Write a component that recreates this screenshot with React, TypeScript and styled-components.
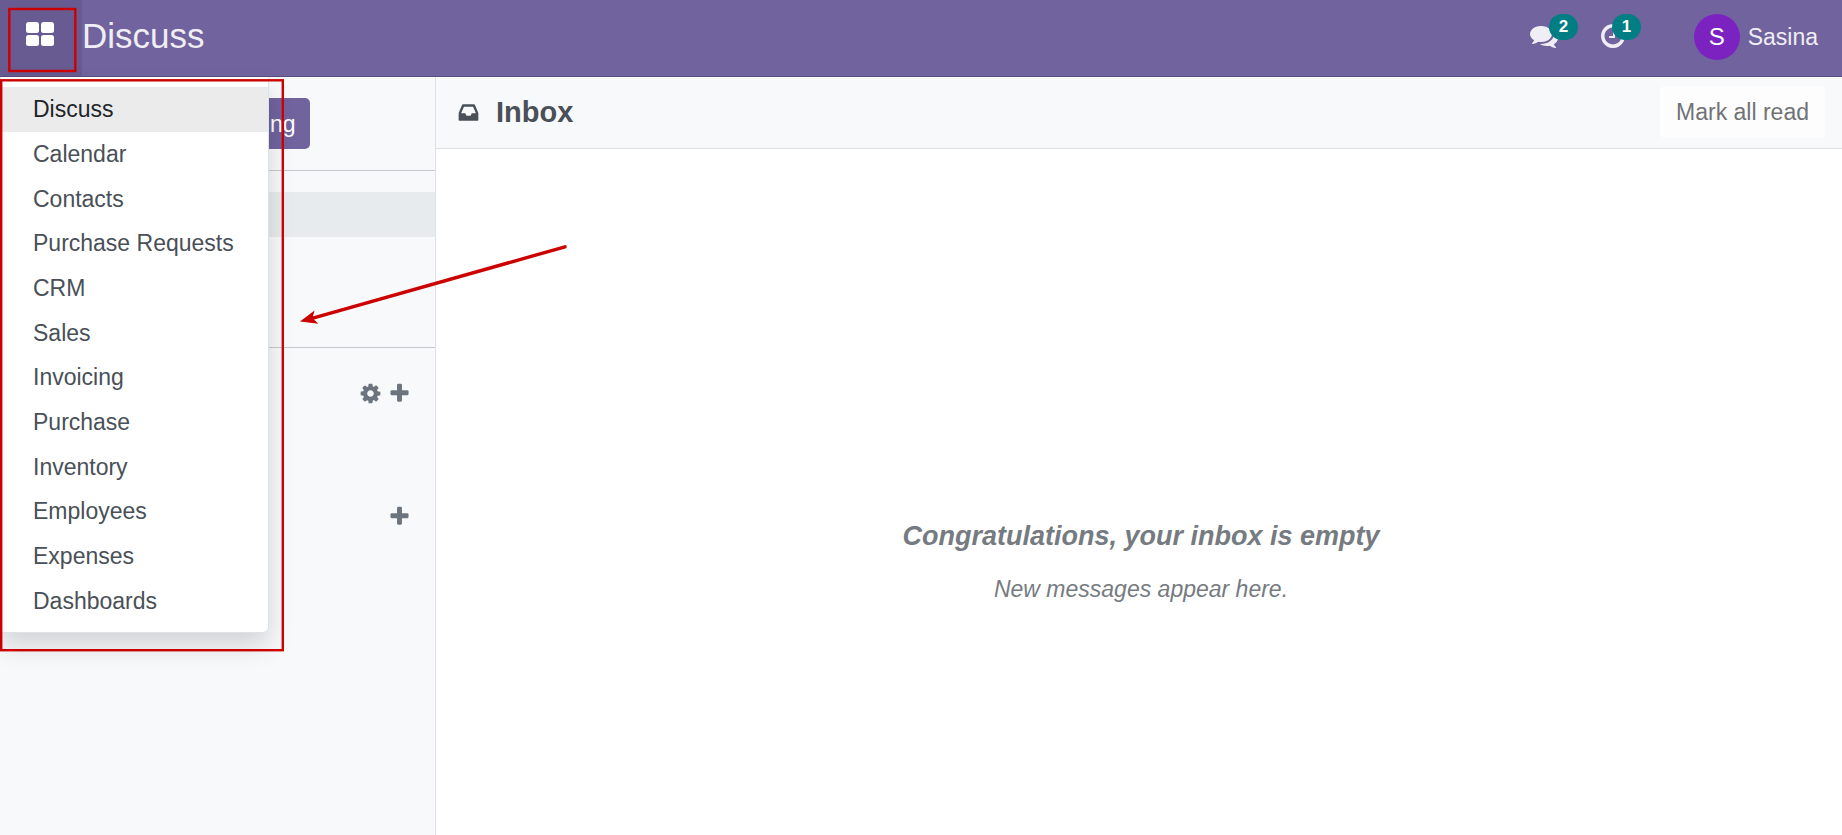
import React from 'react';
import styled, { createGlobalStyle } from 'styled-components';

const GlobalStyle = createGlobalStyle`
  *, *::before, *::after { box-sizing: border-box; }
  body {
    margin: 0;
    background: #fff;
    color: #495057;
    font-family: "Liberation Sans", Arial, sans-serif;
    font-size: 23px;
    line-height: 34px;
  }
  button { font: inherit; color: inherit; border: 0; padding: 0; background: none; cursor: pointer; }
  h1, h2, p, ul { margin: 0; padding: 0; }
  svg { display: block; }
`;

const Page = styled.div`
  position: relative;
  display: flex;
  flex-direction: column;
  min-height: 100vh;
`;

const Navbar = styled.header`
  position: relative;
  display: flex;
  align-items: stretch;
  justify-content: space-between;
  height: 77px;
  background: #71639e;
  border-bottom: 1px solid #5a4f7f;
  color: #f0eef5;
`;

const NavGroup = styled.div`
  display: flex;
  align-items: stretch;
`;

const AppsButton = styled.button`
  display: flex;
  align-items: center;
  justify-content: center;
  width: 82px;
  padding: 0 2px 8px 0;
  background: #685b91;
`;

const Brand = styled.a`
  display: flex;
  align-items: center;
  padding-bottom: 4px;
  color: inherit;
  font-size: 35px;
  text-decoration: none;
`;

const SystrayButton = styled.button<{ $width: number }>`
  position: relative;
  display: flex;
  align-items: center;
  width: ${p => p.$width}px;
  padding-bottom: 4px;
`;

const Badge = styled.span<{ $left: number }>`
  position: absolute;
  top: 14px;
  left: ${p => p.$left}px;
  padding: 0 10px;
  border-radius: 13px;
  background: #017e84;
  color: #fff;
  font-size: 17px;
  font-weight: 700;
  line-height: 26px;
`;

const UserButton = styled.button`
  display: flex;
  align-items: center;
  gap: 8px;
  padding: 0 24px 3px 22px;
`;

const Avatar = styled.span`
  display: flex;
  align-items: center;
  justify-content: center;
  width: 46px;
  height: 46px;
  border-radius: 50%;
  background: #7b22c1;
  color: #fff;
  font-size: 24px;
`;

const AppsMenu = styled.nav`
  position: absolute;
  top: 100%;
  left: 0;
  z-index: 2;
  width: 269px;
  margin-top: 1px;
  padding: 9px 0;
  background: #fff;
  border: 1px solid #dee2e6;
  border-top-color: #fff;
  border-radius: 0 0 6px 0;
  box-shadow: 0 13px 26px rgba(0, 0, 0, 0.15);
`;

const AppList = styled.ul`
  display: grid;
  grid-auto-rows: 1fr;
  min-height: 536px;
  list-style: none;
`;

const AppLink = styled.a<{ $active?: boolean }>`
  display: flex;
  align-items: center;
  height: 100%;
  padding: 0 32px;
  color: ${p => (p.$active ? '#212529' : '#495057')};
  background: ${p => (p.$active ? '#ebebeb' : 'transparent')};
  text-decoration: none;
  white-space: nowrap;
`;

const Body = styled.div`
  display: flex;
  flex: 1;
`;

const Sidebar = styled.aside`
  display: flex;
  flex-direction: column;
  flex: 0 0 436px;
  background: #f8f9fb;
  border-right: 1px solid #dee2e6;
`;

const MeetingBar = styled.div`
  display: flex;
  justify-content: center;
  padding: 21px 0;
  border-bottom: 1px solid #c6c9cd;
`;

const MeetingButton = styled.button`
  height: 51px;
  padding: 0 15px;
  border-radius: 5px;
  background: #71639e;
  color: #fff;
`;

const Mailboxes = styled.div`
  display: flex;
  flex-direction: column;
  padding: 21px 0 20px;
  border-bottom: 1px solid #c6c9cd;
`;

const Mailbox = styled.button<{ $active?: boolean }>`
  height: 45px;
  background: ${p => (p.$active ? '#e7ebee' : 'transparent')};
`;

const Category = styled.div`
  display: flex;
  align-items: flex-start;
  justify-content: flex-end;
  gap: 6px;
  height: 123px;
  padding-right: 24px;
  color: #6c757d;
`;

const Categories = styled.div`
  padding-top: 34px;
`;

const Thread = styled.main`
  display: flex;
  flex: 1;
  flex-direction: column;
  min-width: 0;
`;

const ThreadHeader = styled.div`
  display: flex;
  align-items: center;
  justify-content: space-between;
  height: 72px;
  padding: 0 17px 1px 21px;
  background: #f8f9fb;
  border-bottom: 1px solid #dee2e6;
`;

const ThreadTitle = styled.div`
  display: flex;
  align-items: center;
  gap: 16px;
`;

const Title = styled.h1`
  font-size: 29px;
  font-weight: 700;
`;

const MarkButton = styled.button`
  height: 52px;
  padding: 0 16px;
  border-radius: 5px;
  background: #fdfdfe;
  color: #707376;
`;

const EmptyState = styled.section`
  display: flex;
  flex-direction: column;
  align-items: center;
  gap: 19px;
  padding: 370px 0 0 4px;
  color: #757b80;
  font-style: italic;
  text-align: center;
`;

const EmptyTitle = styled.h2`
  font-size: 27px;
  font-weight: 700;
`;

const Annotations = styled.svg`
  position: absolute;
  top: 0;
  left: 0;
  z-index: 3;
  pointer-events: none;
`;

const icons = {
  comments:
    'M1408 768q0 139-94 257t-256.5 186.5-353.5 68.5q-86 0-176-16-124 88-278 128-36 9-86 16h-3q-11 0-20.5-8t-11.5-21q-1-3-1-6.5t.5-6.5 2-6l2.5-5 3.5-5.5 4-5 4.5-5 4-4.5q5-6 23-25t26-29.5 22.5-29 25-38.5 20.5-44q-124-72-195-177t-71-224q0-139 94-257t256.5-186.5 353.5-68.5 353.5 68.5 256.5 186.5 94 257zm384 256q0 120-71 224.5t-195 176.5q10 24 20.5 44t25 38.5 22.5 29 26 29.5 23 25q1 1 4 4.5t4.5 5 4 5 3.5 5.5l2.5 5 2 6 .5 6.5-1 6.5q-3 14-13 22t-22 7q-50-7-86-16-154-40-278-128-90 16-176 16-271 0-472-132 58 4 88 4 161 0 309-45t264-129q125-92 192-212t67-254q0-77-23-152 129 71 204 178t75 230z',
  clock:
    'M1024 544v448q0 14-9 23t-23 9h-320q-14 0-23-9t-9-23v-64q0-14 9-23t23-9h224v-352q0-14 9-23t23-9h64q14 0 23 9t9 23zm416 352q0-148-73-273t-198-198-273-73-273 73-198 198-73 273 73 273 198 198 273 73 273-73 198-198 73-273zm224 0q0 209-103 385.5t-279.5 279.5-385.5 103-385.5-103-279.5-279.5-103-385.5 103-385.5 279.5-279.5 385.5-103 385.5 103 279.5 279.5 103 385.5z',
  inbox:
    'M1151 960h316q-1-3-2.5-8t-2.5-8l-212-496h-708l-212 496q-1 2-2.5 8t-2.5 8h316l95 192h320zm513 30v482q0 26-19 45t-45 19h-1408q-26 0-45-19t-19-45v-482q0-62 25-123l238-552q10-25 36.5-42t52.5-17h832q26 0 52.5 17t36.5 42l238 552q25 61 25 123z',
  cog:
    'M1152 896q0-106-75-181t-181-75-181 75-75 181 75 181 181 75 181-75 75-181zm512-109v222q0 12-8 23t-20 13l-185 28q-19 54-39 91 35 50 107 138 10 12 10 25t-9 23q-27 37-99 108t-94 71q-12 0-26-9l-138-108q-44 23-91 38-16 136-29 186-7 28-36 28h-222q-14 0-24.5-8.5t-11.5-21.5l-28-184q-49-16-90-37l-141 107q-10 9-25 9-14 0-25-11-126-114-165-168-7-10-7-23 0-12 8-23 15-21 51-66.5t54-70.5q-27-50-41-99l-183-27q-13-2-21-12.5t-8-23.5v-222q0-12 8-23t19-13l186-28q14-46 39-92-40-57-107-138-10-12-10-24 0-10 9-23 26-36 98.5-107.5t94.5-71.5q13 0 26 10l138 107q44-23 91-38 16-136 29-186 7-28 36-28h222q14 0 24.5 8.5t11.5 21.5l28 184q49 16 90 37l142-107q9-9 24-9 13 0 25 10 129 119 165 170 7 8 7 22 0 12-8 23-15 21-51 66.5t-54 70.5q26 50 41 98l183 28q13 2 21 12.5t8 23.5z',
  plus:
    'M1600 736v192q0 40-28 68t-68 28h-416v416q0 40-28 68t-68 28h-192q-40 0-68-28t-28-68v-416h-416q-40 0-68-28t-28-68v-192q0-40 28-68t68-28h416v-416q0-40 28-68t68-28h192q40 0 68 28t28 68v416h416q40 0 68 28t28 68z',
};

function Icon({ name, size }: { name: keyof typeof icons; size: number }) {
  return (
    <svg width={size} height={size} viewBox="0 0 1792 1792" fill="currentColor" aria-hidden="true">
      <path d={icons[name]} />
    </svg>
  );
}

const apps = [
  'Discuss',
  'Calendar',
  'Contacts',
  'Purchase Requests',
  'CRM',
  'Sales',
  'Invoicing',
  'Purchase',
  'Inventory',
  'Employees',
  'Expenses',
  'Dashboards',
];

export default function App() {
  return (
    <Page>
      <GlobalStyle />
      <Navbar>
        <NavGroup>
          <AppsButton aria-label="Apps" aria-expanded="true">
            <svg width="28" height="24" viewBox="0 0 28 24" fill="#fff" aria-hidden="true">
              <rect x="0" y="0" width="13" height="11" rx="2.5" />
              <rect x="15" y="0" width="13" height="11" rx="2.5" />
              <rect x="0" y="13" width="13" height="11" rx="2.5" />
              <rect x="15" y="13" width="13" height="11" rx="2.5" />
            </svg>
          </AppsButton>
          <Brand href="#discuss">Discuss</Brand>
        </NavGroup>
        <NavGroup>
          <SystrayButton $width={69} aria-label="Messages">
            <Icon name="comments" size={28} />
            <Badge $left={19}>2</Badge>
          </SystrayButton>
          <SystrayButton $width={73} aria-label="Activities">
            <Icon name="clock" size={28} />
            <Badge $left={13}>1</Badge>
          </SystrayButton>
          <UserButton>
            <Avatar>S</Avatar>
            Sasina
          </UserButton>
        </NavGroup>
        <AppsMenu>
          <AppList>
            {apps.map((app, i) => (
              <li key={app}>
                <AppLink href={`#${app}`} $active={i === 0}>
                  {app}
                </AppLink>
              </li>
            ))}
          </AppList>
        </AppsMenu>
      </Navbar>
      <Body>
        <Sidebar>
          <MeetingBar>
            <MeetingButton>Start a meeting</MeetingButton>
          </MeetingBar>
          <Mailboxes>
            <Mailbox $active aria-label="Inbox" />
            <Mailbox aria-label="Starred" />
            <Mailbox aria-label="History" />
          </Mailboxes>
          <Categories>
            <Category>
              <button aria-label="Channel settings">
                <Icon name="cog" size={23} />
              </button>
              <button aria-label="Add a channel">
                <Icon name="plus" size={23} />
              </button>
            </Category>
            <Category>
              <button aria-label="Start a conversation">
                <Icon name="plus" size={23} />
              </button>
            </Category>
          </Categories>
        </Sidebar>
        <Thread>
          <ThreadHeader>
            <ThreadTitle>
              <Icon name="inbox" size={23} />
              <Title>Inbox</Title>
            </ThreadTitle>
            <MarkButton>Mark all read</MarkButton>
          </ThreadHeader>
          <EmptyState>
            <EmptyTitle>Congratulations, your inbox is empty</EmptyTitle>
            <p>New messages appear here.</p>
          </EmptyState>
        </Thread>
      </Body>
      <Annotations width="600" height="660" viewBox="0 0 600 660" fill="none" stroke="#c00" aria-hidden="true">
        <rect x="9.3" y="9" width="66" height="62" strokeWidth="2.4" />
        <rect x="1.2" y="80.3" width="281.6" height="569.9" strokeWidth="2.4" />
        <path d="M565 246.8 L312 318.4" strokeWidth="3.4" strokeLinecap="round" />
        <path d="M300 321.4 L314.5 310.6 L312.5 318 L318.3 323.8 Z" fill="#c00" stroke="none" />
      </Annotations>
    </Page>
  );
}
